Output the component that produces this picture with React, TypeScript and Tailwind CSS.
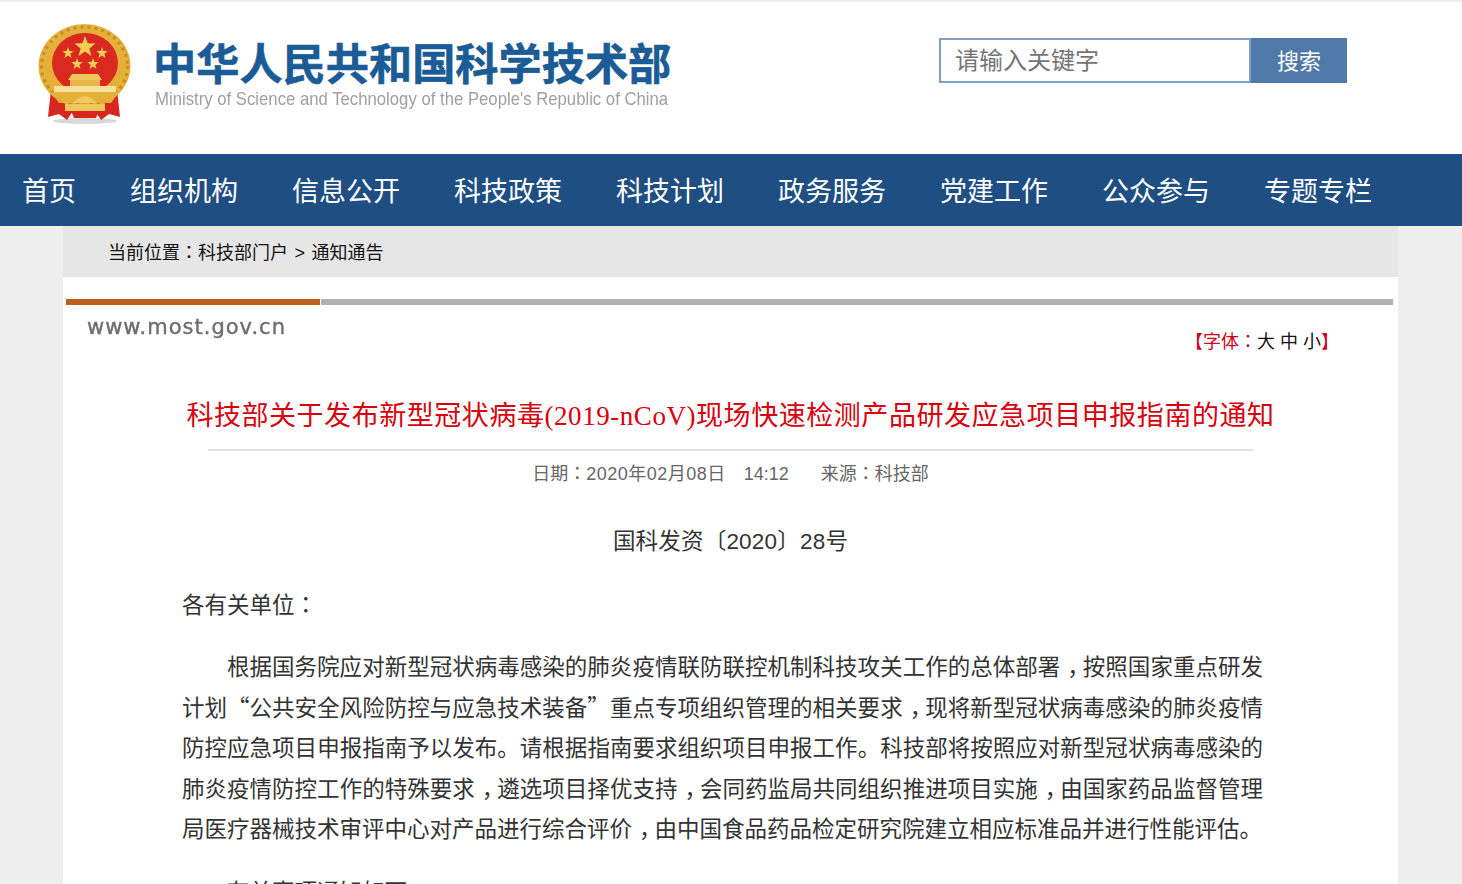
const navItems = ["首页", "组织机构", "信息公开", "科技政策", "科技计划", "政务服务", "党建工作", "公众参与", "专题专栏"];

const cjk = "font-['Liberation_Sans','Noto_Sans_CJK_SC',sans-serif]";

// 参考图里的冒号居中，用繁体字形
const Mark = ({ children }: { children: string }) => (
  <span className="font-['Noto_Sans_CJK_TC',sans-serif]">{children}</span>
);

// 逗号在底线上但水平居中
const Comma = () => <span className="ml-[7px] tracking-[-7px]">，</span>;

const starPoints = (cx: number, cy: number, r: number) => {
  const pts: string[] = [];
  for (let i = 0; i < 10; i++) {
    const rad = i % 2 === 0 ? r : r * 0.42;
    const a = (Math.PI / 5) * i - Math.PI / 2;
    pts.push(`${(cx + rad * Math.cos(a)).toFixed(1)},${(cy + rad * Math.sin(a)).toFixed(1)}`);
  }
  return pts.join(" ");
};

const Emblem = () => (
  <svg width="96" height="104" viewBox="0 0 96 104" className="blur-[0.6px]">
    <ellipse cx="48" cy="98" rx="32" ry="3" fill="#d8d8d8" />
    <path d="M14 66 L11 94 L22 91 L30 97 L40 82 Z" fill="#d8281e" />
    <path d="M80 66 L83 94 L72 91 L64 97 L54 82 Z" fill="#d8281e" />
    <ellipse cx="47.5" cy="43" rx="46" ry="42" fill="#e4b03a" />
    <ellipse cx="47.5" cy="43" rx="43" ry="39" fill="none" stroke="#c68c20" strokeWidth="3" strokeDasharray="3 4" />
    <ellipse cx="48" cy="40" rx="33" ry="30" fill="#da2a1f" />
    <polygon points={starPoints(48, 24, 11)} fill="#f2cd55" />
    <polygon points={starPoints(31, 30, 6)} fill="#f2cd55" />
    <polygon points={starPoints(65, 30, 6)} fill="#f2cd55" />
    <polygon points={starPoints(40, 41, 6)} fill="#f2cd55" />
    <polygon points={starPoints(56, 41, 6)} fill="#f2cd55" />
    <path d="M31 57 L35 51 L61 51 L65 57 Z" fill="#edc65c" />
    <rect x="33" y="57" width="30" height="6" fill="#e7b64a" />
    <rect x="17" y="63" width="62" height="6" fill="#f6e09a" />
    <path d="M14 69 L82 69 L74 80 L22 80 Z" fill="#e4b03a" />
    <path d="M36 80 Q48 66 60 80 Z" fill="#f0c860" />
    <path d="M34 88 L62 88 L59 95 L37 95 Z" fill="#d8281e" />
    <rect x="28" y="81" width="40" height="7" fill="#edc65c" />
  </svg>
);

const App = () => {
  return (
    <div className={`h-[884px] overflow-hidden bg-[#eeeeee] ${cjk}`}>
      {/* 顶部 */}
      <header className="mt-[2px] h-[152px] bg-white flex items-start">
        <div className="ml-[37px] mt-[21px]">
          <Emblem />
        </div>
        <div className="ml-[20px] mt-[33px] w-[520px]">
          <div className="text-[43.2px] leading-[52px] font-bold text-[#1b5b96] whitespace-nowrap font-['Noto_Sans_CJK_SC',sans-serif] [-webkit-text-stroke:0.6px_#1b5b96]">
            中华人民共和国科学技术部
          </div>
          <div className="mt-[3px] ml-[2px] text-[19px] leading-[18px] text-[#a0a0a0] whitespace-nowrap origin-left scale-x-[0.88]">
            Ministry of Science and Technology of the People's Republic of China
          </div>
        </div>
        <div className="ml-[266px] mt-[36px] flex h-[45px]">
          <div className="w-[312px] border-2 border-[#7f9fc8] bg-white pl-[14px] text-[24px] leading-[41px] text-[#757575]">
            请输入关键字
          </div>
          <button className="w-[96px] pt-[2px] bg-[#4e79a8] text-[22px] text-white">搜索</button>
        </div>
      </header>

      {/* 导航 */}
      <nav className="h-[72px] bg-[#1f4e82] flex items-center pt-[4px] pl-[22px] gap-[54px]">
        {navItems.map((item) => (
          <a key={item} className="text-[27px] leading-[68px] text-white whitespace-nowrap">
            {item}
          </a>
        ))}
      </nav>

      {/* 正文 */}
      <main className="mx-[63px] w-[1335px] h-[658px] overflow-hidden bg-white">
        <div className="h-[51px] bg-[#e6e6e6] pl-[45px] text-[18px] leading-[51px] text-[#111]">
          当前位置<Mark>：</Mark>科技部门户<span className="mx-[1.5px]"> &gt; </span>通知通告
        </div>

        <div className="pt-[22px] px-[3px] flex gap-[1px]">
          <div className="h-[6px] w-[254px] bg-[#bd5f1c]" />
          <div className="h-[6px] w-[1072px] bg-[#b0b0b0]" />
        </div>

        <div className="flex justify-between h-[91px]">
          <div className="ml-[24px] mt-[8px] text-[21px] leading-[28px] tracking-[1px] text-[#6e6e6e] font-['DejaVu_Sans',sans-serif] blur-[0.4px] [-webkit-text-stroke:0.4px_#6e6e6e]">
            www.most.gov.cn
          </div>
          <div className="mr-[59px] mt-[22px] text-[18px] leading-[26px] text-[#111]">
            <span className="text-[#d0021b]">【字体<Mark>：</Mark></span>大 中 小<span className="text-[#d0021b]">】</span>
          </div>
        </div>

        <h1 className="text-center text-[27px] tracking-[0.55px] leading-[40px] font-normal text-[#d9000d] whitespace-nowrap font-['Liberation_Serif','Noto_Sans_CJK_SC',serif]">
          科技部关于发布新型冠状病毒(2019-nCoV)现场快速检测产品研发应急项目申报指南的通知
        </h1>

        <div className="mx-[145px] mt-[13px] border-t-2 border-[#e3e3e3] pt-[7px] text-center text-[18px] leading-[28px] text-[#666]">
          日期<Mark>：</Mark><span className="tracking-[0.5px]">2020年02月08日</span>
          <span className="ml-[18px]">14:12</span>
          <span className="ml-[32px]">来源<Mark>：</Mark>科技部</span>
        </div>

        <div className="ml-[119px] mr-[135px] mt-[34px] text-[22.5px] leading-[40.5px] text-[#333] text-justify font-['Noto_Sans_CJK_SC',sans-serif]">
          <p className={`text-center pl-[16px] mb-[20px] tracking-[0.2px] ${cjk}`}>国科发资〔2020〕28号</p>
          <p className="mb-[22px]">各有关单位<Mark>：</Mark></p>
          <p className="indent-[45px] mb-[22px]">
            根据国务院应对新型冠状病毒感染的肺炎疫情联防联控机制科技攻关工作的总体部署<Comma />按照国家重点研发计划“公共安全风险防控与应急技术装备”重点专项组织管理的相关要求<Comma />现将新型冠状病毒感染的肺炎疫情防控应急项目申报指南予以发布。请根据指南要求组织项目申报工作。科技部将按照应对新型冠状病毒感染的肺炎疫情防控工作的特殊要求<Comma />遴选项目择优支持<Comma />会同药监局共同组织推进项目实施<Comma />由国家药品监督管理局医疗器械技术审评中心对产品进行综合评价<Comma />由中国食品药品检定研究院建立相应标准品并进行性能评估。
          </p>
          <p className="indent-[45px]">有关事项通知如下</p>
        </div>
      </main>
    </div>
  );
};

export default App;
